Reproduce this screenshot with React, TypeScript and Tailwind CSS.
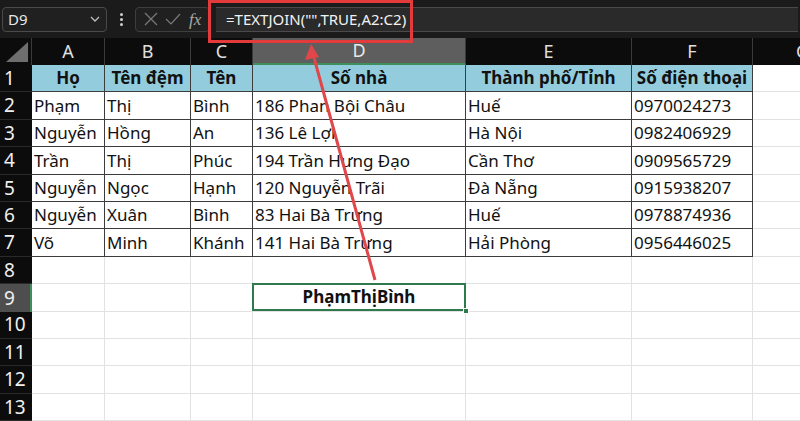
import React from "react";

const COLS = [
  { key: "A", w: 73 },
  { key: "B", w: 86 },
  { key: "C", w: 62 },
  { key: "D", w: 213 },
  { key: "E", w: 166 },
  { key: "F", w: 121 },
  { key: "G", w: 100 },
];

const HEADERS = ["Họ", "Tên đệm", "Tên", "Số nhà", "Thành phố/Tỉnh", "Số điện thoại"];

const ROWS = [
  ["Phạm", "Thị", "Bình", "186 Phan Bội Châu", "Huế", "0970024273"],
  ["Nguyễn", "Hồng", "An", "136 Lê Lợi", "Hà Nội", "0982406929"],
  ["Trần", "Thị", "Phúc", "194 Trần Hưng Đạo", "Cần Thơ", "0909565729"],
  ["Nguyễn", "Ngọc", "Hạnh", "120 Nguyễn Trãi", "Đà Nẵng", "0915938207"],
  ["Nguyễn", "Xuân", "Bình", "83 Hai Bà Trưng", "Huế", "0978874936"],
  ["Võ", "Minh", "Khánh", "141 Hai Bà Trưng", "Hải Phòng", "0956446025"],
];

const FONT = { fontFamily: '"Noto Sans", "Open Sans", sans-serif' };

function TopBar() {
  return (
    <div className="h-[38px] bg-[#1b1b1b] flex items-center gap-[6px] px-[2px]">
      <div className="w-[105px] h-[25px] rounded-[4px] border border-[#4a4a4a] bg-[#202020] flex items-center justify-between pl-[5px] pr-[6px]">
        <span className="text-[15px] text-[#e8e8e8]">D9</span>
        <svg width="10" height="6" viewBox="0 0 10 6">
          <path d="M1 1 L5 5 L9 1" stroke="#bdbdbd" strokeWidth="1.3" fill="none" />
        </svg>
      </div>
      <div className="w-[16px] flex flex-col items-center gap-[2px]">
        <span className="w-[3px] h-[3px] rounded-full bg-[#cfcfcf]" />
        <span className="w-[3px] h-[3px] rounded-full bg-[#cfcfcf]" />
        <span className="w-[3px] h-[3px] rounded-full bg-[#cfcfcf]" />
      </div>
      <div className="w-[75px] h-[25px] rounded-[4px] border border-[#3e3e3e] bg-[#202020] flex items-center justify-around px-[4px]">
        <svg width="14" height="14" viewBox="0 0 14 14">
          <path d="M1 1 L13 13 M13 1 L1 13" stroke="#7a7a7a" strokeWidth="1.2" />
        </svg>
        <svg width="16" height="12" viewBox="0 0 16 12">
          <path d="M1 6 L6 11 L15 1" stroke="#7a7a7a" strokeWidth="1.2" fill="none" />
        </svg>
        <span className="text-[17px] italic text-[#a8a8a8] leading-none" style={{ fontFamily: '"Liberation Serif", serif' }}>
          fx
        </span>
      </div>
      <div className="flex-1 h-[25px] bg-[#2a2a2a] border-y border-[#4a4a4a] flex items-center pl-[10px]">
        <span className="text-[15px] text-[#f2f2f2]">=TEXTJOIN("",TRUE,A2:C2)</span>
      </div>
    </div>
  );
}

function ColHeader() {
  return (
    <div className="flex h-[27px] bg-[#0c0c0c]">
      <div className="w-[32px] shrink-0 border-r border-[#3a3a3a] flex items-end justify-end p-[3px]">
        <svg width="22" height="20" viewBox="0 0 22 20">
          <polygon points="22,0 22,20 0,20" fill="#6e6e6e" />
        </svg>
      </div>
      {COLS.map((c) => (
        <div
          key={c.key}
          className={
            c.key === "D"
              ? "shrink-0 flex items-center justify-center text-[18px] text-[#e8e8e8] bg-[#5e5e5e] border-r border-[#3a3a3a] border-b-2 border-b-[#3e8e5e]"
              : "shrink-0 flex items-center justify-center text-[18px] text-[#e0e0e0] border-r border-[#3a3a3a]"
          }
          style={{ width: c.w }}
        >
          {c.key}
        </div>
      ))}
    </div>
  );
}

function Row({ n, cells }: { n: number; cells: string[] | null }) {
  const inData = n <= 7;
  const isHead = n === 1;
  const selRow = n === 9;
  return (
    <div className="flex h-[27.4px]">
      <div
        className={
          selRow
            ? "w-[32px] shrink-0 bg-[#4e4e4e] border-r-2 border-[#3e8e5e] flex items-center pl-[4px] text-[19px] text-[#f0f0f0]"
            : "w-[32px] shrink-0 bg-[#0c0c0c] border-b border-[#2a2a2a] flex items-center pl-[4px] text-[19px] text-[#f0f0f0]"
        }
      >
        {n}
      </div>
      {COLS.map((c, i) => {
        const dataCell = inData && i < 6;
        const text = cells && i < 6 ? cells[i] : "";
        let cls = "shrink-0 flex items-center text-[17px] text-[#111] whitespace-nowrap overflow-hidden ";
        if (dataCell) {
          cls += "border-r border-b border-[#3c3c3c] px-[2px] ";
          cls += isHead ? "bg-[#93cddd] font-bold justify-center" : "bg-white";
        } else {
          cls += "bg-white border-r border-b border-[#e2e2e2]";
        }
        if (n === 9 && c.key === "D") {
          return (
            <div key={c.key} className="shrink-0 relative bg-white border-b border-[#e2e2e2]" style={{ width: c.w }}>
              <div className="absolute -top-[1px] -left-[1px] right-0 bottom-0 border-2 border-[#2f7a4c] flex items-center justify-center font-bold text-[17px] text-[#111]">
                PhạmThịBình
              </div>
              <div className="absolute -right-[3px] -bottom-[3px] w-[6px] h-[6px] bg-[#2f7a4c] border border-white" />
            </div>
          );
        }
        return (
          <div key={c.key} className={cls} style={{ width: c.w }}>
            {text}
          </div>
        );
      })}
    </div>
  );
}

export default function App() {
  const rows: (string[] | null)[] = [HEADERS, ...ROWS, null, null, null, null, null, null];
  return (
    <div className="relative w-[800px] h-[421px] overflow-hidden bg-white" style={FONT}>
      <TopBar />
      <ColHeader />
      {rows.map((r, i) => (
        <Row key={i} n={i + 1} cells={r} />
      ))}
      <svg className="absolute inset-0 pointer-events-none" width="800" height="421" viewBox="0 0 800 421">
        <rect x="209.5" y="1.5" width="202" height="40" fill="none" stroke="#e33b3b" strokeWidth="3" />
        <line x1="375" y1="280" x2="313" y2="54" stroke="#e0464a" strokeWidth="3" />
        <polygon points="311,44 305,60 319,57" fill="#e0464a" />
      </svg>
    </div>
  );
}
